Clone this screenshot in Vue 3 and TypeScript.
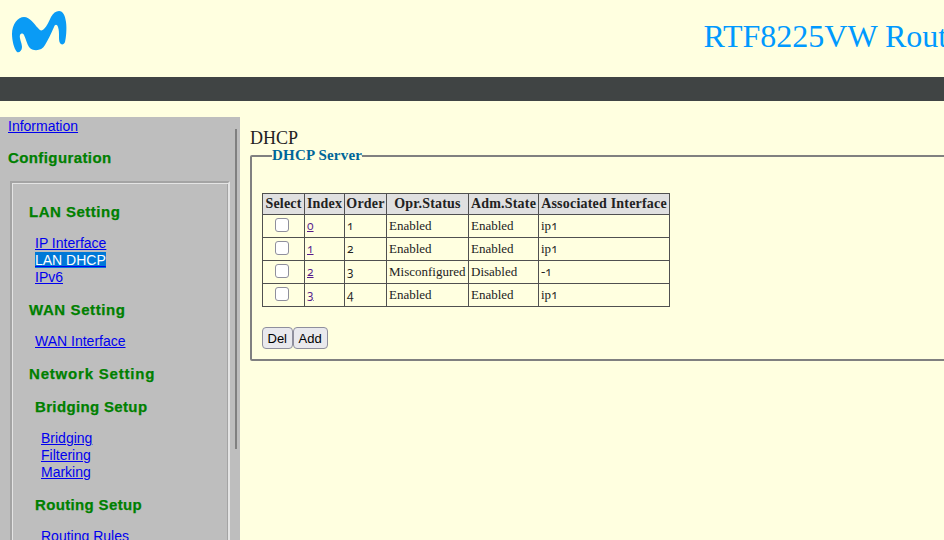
<script setup lang="ts">
interface Row { idx: string; order: string; status: string; adm: string; iface: string; num: string }
const rows: Row[] = [
  { idx: '0', order: '1', status: 'Enabled', adm: 'Enabled', iface: 'ip', num: '1' },
  { idx: '1', order: '2', status: 'Enabled', adm: 'Enabled', iface: 'ip', num: '1' },
  { idx: '2', order: '3', status: 'Misconfigured', adm: 'Disabled', iface: '-', num: '1' },
  { idx: '3', order: '4', status: 'Enabled', adm: 'Enabled', iface: 'ip', num: '1' },
]
const heads = ['Select', 'Index', 'Order', 'Opr.Status', 'Adm.State', 'Associated Interface']
</script>

<template>
  <div class="page">
    <header class="top">
      <svg class="logo" width="80" height="60" viewBox="0 0 80 60">
        <path fill="#0a9bf5" d="M17 52 C14 49 12 40 12 34 C12 24 18 17 24 17 C30 17 34 24 38 28 C40 31 42 31 44 29 C47 26 49 21 51 17 C53 13 56 11 59 11 C63 11 65 15 66 22 C67 29 66 38 65 42 C64 45 61 45 60 43 C58 40 60 33 58 27 C57 24 55 24 54 27 C51 34 48 40 45 45 C42 51 33 52 29 47 C27 44 26 39 24 35 C23 33 21 33 20 35 C19 38 22 43 22 47 C22 51 19 53 17 52 Z" />
      </svg>
      <h1 class="title">RTF8225VW Router</h1>
    </header>
    <div class="bar"></div>
    <div class="body">
      <aside class="side">
        <i class="scroll"></i>
        <a class="link first" href="#">Information</a>
        <h3 class="cfg">Configuration</h3>
        <div class="box">
          <h3 class="h1">LAN Setting</h3>
          <ul class="l1">
            <li><a href="#">IP Interface</a></li>
            <li><a href="#"><span class="sel">LAN DHCP</span></a></li>
            <li><a href="#">IPv6</a></li>
          </ul>
          <h3 class="h1 wan">WAN Setting</h3>
          <ul class="l1">
            <li><a href="#">WAN Interface</a></li>
          </ul>
          <h3 class="h1 net">Network Setting</h3>
          <h3 class="h2">Bridging Setup</h3>
          <ul class="l2">
            <li><a href="#">Bridging</a></li>
            <li><a href="#">Filtering</a></li>
            <li><a href="#">Marking</a></li>
          </ul>
          <h3 class="h2">Routing Setup</h3>
          <ul class="l2">
            <li><a href="#">Routing Rules</a></li>
          </ul>
        </div>
      </aside>
      <main class="main">
        <div class="head">DHCP</div>
        <fieldset class="fs">
          <legend class="lg">DHCP Server</legend>
          <table class="tb">
            <thead>
              <tr><th v-for="h in heads" :key="h">{{ h }}</th></tr>
            </thead>
            <tbody>
              <tr v-for="r in rows" :key="r.idx">
                <td class="c"><input class="cb" type="checkbox" /></td>
                <td><a class="v num" href="#">{{ r.idx }}</a></td>
                <td><span class="num">{{ r.order }}</span></td>
                <td>{{ r.status }}</td>
                <td>{{ r.adm }}</td>
                <td>{{ r.iface }}<span class="num">{{ r.num }}</span></td>
              </tr>
            </tbody>
          </table>
          <div class="btns">
            <button class="btn" type="button">Del</button><button class="btn" type="button">Add</button>
          </div>
        </fieldset>
      </main>
    </div>
  </div>
</template>

<style>
html, body { margin: 0; height: 100%; overflow: hidden; background: #ffffe0; }
</style>

<style scoped>
.page { width: 944px; height: 540px; overflow: hidden; background: #ffffe0; }
.top { height: 77px; display: flex; align-items: flex-start; }
.logo { display: block; flex: none; }
.title {
  margin: 18px 0 0 623.5px;
  font: 400 32px/37px "Liberation Serif", serif;
  color: #0099ff;
  white-space: nowrap;
}
.bar { height: 24px; background: #404444; }
.body { display: flex; margin-top: 16px; height: 423px; }
.side {
  position: relative;
  flex: none;
  width: 240px;
  background: #bebebe;
  overflow: hidden;
  font: 14px/17px "Liberation Sans", sans-serif;
  box-sizing: border-box;
  padding: 1px 0 0 8px;
}
.scroll { position: absolute; left: 235px; top: 12px; width: 2px; height: 320px; background: #808080; }
a { color: #0000ee; }
a.v { color: #551a8b; }
.link { display: block; }
h3 {
  margin: 0;
  font: 700 15px/17px "Liberation Sans", sans-serif;
  color: #008000;
  letter-spacing: 0.5px;
  -webkit-text-stroke: 0.25px #008000;
}
.cfg { margin-top: 14px; letter-spacing: 0.4px; }
.box {
  box-sizing: border-box;
  margin: 15px 0 0 2px;
  width: 220px;
  height: 400px;
  border: 2px solid;
  border-color: #a4a4a4 #e4e4e4 #e4e4e4 #a4a4a4;
  box-shadow: inset 1px 1px 0 #e4e4e4, inset -1px -1px 0 #a4a4a4;
  padding: 20px 0 0 17px;
}
.h1 { margin-bottom: 15px; }
.h2 { margin: 0 0 15px 6px; letter-spacing: 0.35px; }
ul { list-style: none; margin: 0; padding: 0; }
.l1 { margin: 0 0 15px 6px; }
.l2 { margin: 0 0 15px 12px; }
.wan { letter-spacing: 0.6px; }
.net { margin-bottom: 16px; letter-spacing: 0.8px; }
.sel { background: #0078d7; color: #fff; }
.main { flex: 1; padding: 11px 0 0 10px; min-width: 0; }
.head { font: 18px/20px "Liberation Serif", serif; color: #222; }
.fs {
  width: 900px;
  height: 214px;
  box-sizing: border-box;
  margin: -1px 0 0;
  padding: 29px 10px 0;
  border: 2px solid #808080;
  border-radius: 2px;
}
.lg {
  padding: 0;
  margin-left: 10px;
  font: 700 15px/17px "Liberation Serif", serif;
  letter-spacing: 0.2px;
  color: #006699;
}
.tb {
  border-collapse: collapse;
  table-layout: fixed;
  width: 407px;
  font: 13px/14px "Liberation Serif", serif;
  color: #222;
}
.tb th:nth-child(1) { width: 42px; }
.tb th:nth-child(2) { width: 40px; }
.tb th:nth-child(3) { width: 42px; }
.tb th:nth-child(4) { width: 82px; }
.tb th:nth-child(5) { width: 70px; }
.tb th:nth-child(6) { width: 131px; }
.tb th, .tb td { border: 1px solid #505050; padding: 4px 2px; text-align: left; white-space: nowrap; box-sizing: border-box; }
.tb th { background: #e0e0e0; font-weight: 700; font-size: 14px; letter-spacing: 0.2px; text-align: center; padding: 3px 0; }
.tb .c { text-align: center; padding: 0 4px 0 0; }
.num { font-family: "Open Sans", sans-serif; font-variant-numeric: oldstyle-nums; font-size: 12px; }
.cb {
  appearance: none;
  box-sizing: border-box;
  width: 14px;
  height: 14px;
  margin: 1px 0 4px;
  vertical-align: middle;
  background: #fff;
  border: 1px solid #8f8f9d;
  border-radius: 3px;
}
.btns { margin-top: 20px; display: flex; }
.btn {
  height: 22px;
  padding: 0 4.5px;
  margin: 0;
  font: 13px "Liberation Sans", sans-serif;
  color: #000;
  background: #e9e9ed;
  border: 1px solid #8f8f9d;
  border-radius: 4px;
}
.btn + .btn { padding: 0 5px; }
</style>
